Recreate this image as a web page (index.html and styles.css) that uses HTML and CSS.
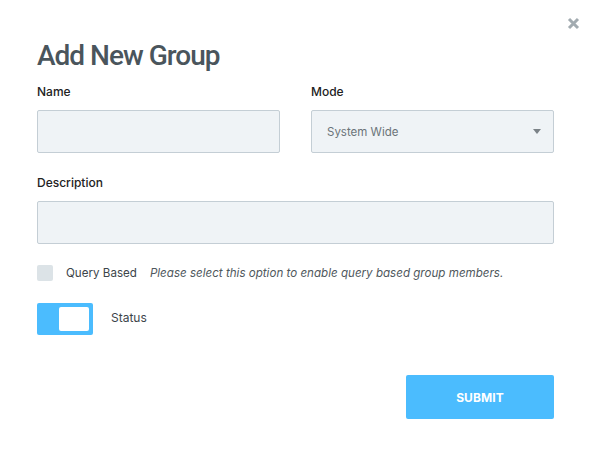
FILE: index.html
```html
<!DOCTYPE html>
<html>
<head>
<meta charset="utf-8">
<link rel="stylesheet" href="styles.css">
</head>
<body>
<div class="modal">
  <button class="close" aria-label="Close">
    <svg width="13" height="13" viewBox="0 0 13 13"><path d="M2 2L11 11M11 2L2 11" stroke="#a2abb0" stroke-width="3" stroke-linecap="butt"/></svg>
  </button>
  <h1 class="title">Add New Group</h1>
  <div class="row two">
    <div class="field">
      <label class="label">Name</label>
      <div class="input"></div>
    </div>
    <div class="field">
      <label class="label">Mode</label>
      <div class="input select">
        <span class="select-text">System Wide</span>
        <span class="caret"></span>
      </div>
    </div>
  </div>
  <div class="row">
    <div class="field">
      <label class="label">Description</label>
      <div class="input"></div>
    </div>
  </div>
  <div class="check-row">
    <span class="checkbox"></span>
    <span class="check-label">Query Based</span>
    <span class="hint">Please select this option to enable query based group members.</span>
  </div>
  <div class="toggle-row">
    <span class="toggle"><span class="knob"></span></span>
    <span class="toggle-label">Status</span>
  </div>
  <div class="actions">
    <button class="submit">SUBMIT</button>
  </div>
</div>
</body>
</html>
```
FILE: styles.css
```css
html, body {
  margin: 0;
  background: #ffffff;
}
body {
  font-family: Inter, "Noto Sans", sans-serif;
  color: #222;
}
.modal {
  position: relative;
  width: 592px;
  height: 450px;
  box-sizing: border-box;
  padding: 38px 38px 0 37px;
}
.close {
  position: absolute;
  top: 17px;
  right: 12px;
  padding: 0;
  border: 0;
  background: none;
  width: 13px;
  height: 13px;
  display: block;
}
.close svg { display: block; }
.title {
  margin: 0;
  font-family: Roboto, Inter, sans-serif;
  font-size: 28px;
  line-height: 36px;
  font-weight: 500;
  letter-spacing: -1px;
  color: #4a555c;
}
.row {
  display: grid;
  grid-template-columns: 1fr;
}
.row.two {
  grid-template-columns: 243px 243px;
  column-gap: 31px;
  margin-top: 10px;
}
.row + .row {
  margin-top: 22px;
}
.field {
  display: flex;
  flex-direction: column;
}
.label {
  font-size: 12px;
  line-height: 15px;
  font-weight: 500;
  color: #222;
  margin-bottom: 11px;
}
.input {
  height: 43px;
  box-sizing: border-box;
  background: #eff3f6;
  border: 1px solid #c4ced5;
  border-radius: 2px;
}
.select {
  display: flex;
  align-items: center;
  justify-content: space-between;
  padding: 0 12px 0 15px;
}
.select-text {
  font-size: 11.5px;
  color: #6b7479;
}
.caret {
  width: 0;
  height: 0;
  border-left: 4px solid transparent;
  border-right: 4px solid transparent;
  border-top: 5px solid #7b8287;
}
.check-row {
  display: flex;
  align-items: center;
  margin-top: 21px;
  height: 16px;
}
.checkbox {
  width: 16px;
  height: 16px;
  background: #dce3e7;
  border-radius: 2px;
  flex: none;
}
.check-label {
  margin-left: 13px;
  font-size: 11.6px;
  color: #3c454a;
}
.hint {
  margin-left: 13px;
  font-size: 11.6px;
  font-style: italic;
  color: #4f585d;
}
.toggle-row {
  display: flex;
  align-items: center;
  margin-top: 22px;
}
.toggle {
  width: 56px;
  height: 32px;
  box-sizing: border-box;
  background: #4bbcfe;
  border-radius: 2px;
  padding: 4px 4px 4px 22px;
  flex: none;
}
.knob {
  display: block;
  width: 30px;
  height: 24px;
  background: #fff;
  border-radius: 2px;
}
.toggle-label {
  margin-left: 18px;
  font-size: 12px;
  line-height: 14px;
  padding-bottom: 2px;
  color: #3c454a;
}
.actions {
  display: flex;
  justify-content: flex-end;
  margin-top: 40px;
}
.submit {
  width: 148px;
  height: 44px;
  border: 0;
  border-radius: 2px;
  background: #4bbcfe;
  color: #fff;
  font-family: inherit;
  font-size: 12px;
  font-weight: 700;
  letter-spacing: 0.1px;
}
```
